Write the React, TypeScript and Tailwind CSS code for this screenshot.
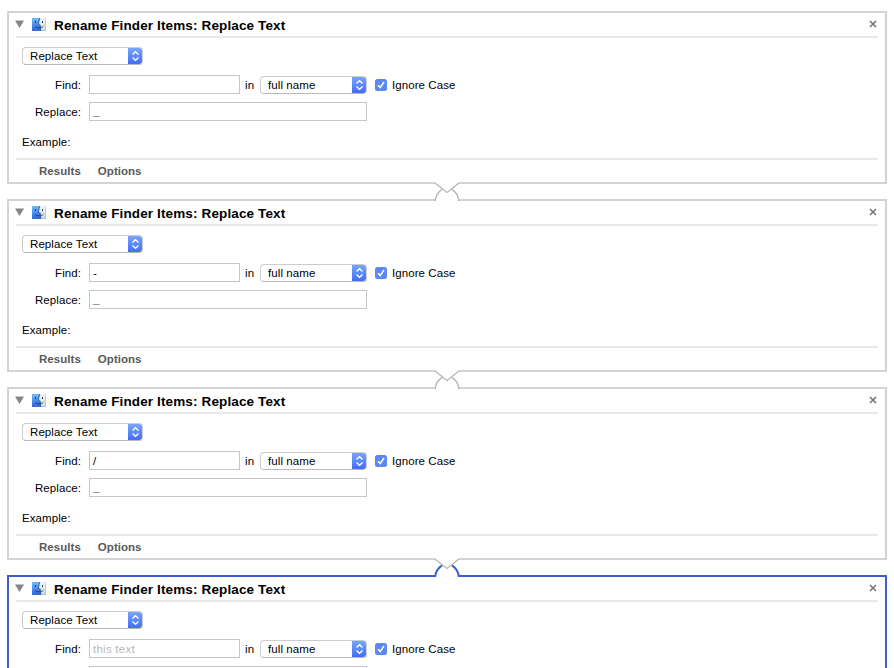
type Action = { find: string; replace?: string; placeholder?: string; selected?: boolean };

const actions: Action[] = [
  { find: "", replace: "_" },
  { find: "-", replace: "_" },
  { find: "/", replace: "_" },
  { find: "", placeholder: "this text", selected: true },
];

function FinderIcon() {
  return (
    <svg width="14" height="13" viewBox="0 0 14 13" className="ml-2 shrink-0">
      <defs>
        <linearGradient id="face" x1="0" y1="0" x2="0" y2="1">
          <stop offset="0" stopColor="#6ebcfb" />
          <stop offset="1" stopColor="#2f62e0" />
        </linearGradient>
        <linearGradient id="side" x1="0" y1="0" x2="0" y2="1">
          <stop offset="0" stopColor="#f3f6fa" />
          <stop offset="1" stopColor="#cddcf0" />
        </linearGradient>
      </defs>
      <rect width="14" height="13" fill="url(#side)" />
      <path d="M0 0H7.8C6.9 2.6 6.5 4.8 6.5 7H8.2C8.2 9.2 8.4 11 8.9 13H0Z" fill="url(#face)" />
      <path d="M7.8 0C6.9 2.6 6.5 4.8 6.5 7H8.2C8.2 9.2 8.4 11 8.9 13" fill="none" stroke="#27476f" strokeWidth=".8" />
      <path d="M3.5 3V5M10.5 3V5" stroke="#1c3557" strokeWidth="1" />
      <path d="M2.8 8.3C5 10.3 9.2 10.3 11.4 8.3" fill="none" stroke="#1c3557" strokeWidth=".9" />
      <path d="M13.5 0V12.5H0" fill="none" stroke="#6d8199" strokeOpacity=".3" />
    </svg>
  );
}

function Popup({ label, width }: { label: string; width: string }) {
  return (
    <div className={`${width} flex h-[18px] shrink-0 overflow-hidden rounded-[4px] border border-[#cdcdcd] border-b-[#b8b8b8] bg-white`}>
      <span className="flex-1 whitespace-pre pl-[7px] leading-[17px]">{label}</span>
      <span className="-my-px -mr-px flex h-[18px] w-[15px] items-center justify-center bg-linear-to-b from-[#7ca8fa] to-[#3f68f6]">
        <svg width="9" height="12" viewBox="0 0 9 12" fill="none" stroke="white" strokeWidth="1.3">
          <path d="M1.5 4.5 4.5 1.7 7.5 4.5M1.5 7.5 4.5 10.3 7.5 7.5" />
        </svg>
      </span>
    </div>
  );
}

function Connector({ selected }: { selected?: boolean }) {
  return (
    <svg width="26" height="21" viewBox="0 0 26 21" fill="none" className="absolute -top-[20px] left-[425px]">
      <path d="M1.5 0H24.5V4H1.5ZM2 16H24V21H2Z" fill="white" />
      <path
        d="M1.2 20C1.4 14.5 4 11 8 8.3M24.8 20C24.6 14.5 22 11 18 8.3"
        stroke={selected ? "#3f5cd0" : "#b5b5b5"}
        strokeWidth={selected ? 2 : 1.4}
      />
      <path d="M1 2 13 11.5 25 2" fill="white" stroke="#b5b5b5" strokeWidth="1.2" />
    </svg>
  );
}

function Card({ action, first }: { action: Action; first: boolean }) {
  const { find, replace, placeholder, selected } = action;
  const hasReplace = replace !== undefined;
  return (
    <section className={`relative h-[173px] w-[880px] shrink-0 border-2 px-[7px] ${selected ? "border-[#3f5cd0]" : "border-[#d3d3d3]"}`}>
      {!first && <Connector selected={selected} />}
      <header className="flex h-[25px] items-center border-b-2 border-[#e8e8e8]">
        <svg width="9" height="8" viewBox="0 0 9 8" className="-ml-px mb-px shrink-0">
          <path d="M0 .5H9L4.5 8Z" fill="#858585" />
        </svg>
        <FinderIcon />
        <h2 className="ml-2 flex-1 whitespace-pre pt-[3px] text-[13.5px] font-bold leading-[18px] tracking-[0.13px]">
          Rename Finder Items: Replace Text
        </h2>
        <svg width="8" height="8" viewBox="0 0 8 8" className="mb-0.5 mr-px">
          <path d="M1 1 7 7M7 1 1 7" stroke="#737373" strokeWidth="1.5" />
        </svg>
      </header>
      <div className="pl-[6px] pt-[9px]">
        <Popup label="Replace Text" width="w-[121px]" />
        <div className="mt-[10px] flex h-[19px] items-center">
          <span className="w-[59px] pt-px text-right leading-4">Find:</span>
          <span className="ml-2 h-[19px] w-[151px] border border-[#c6c6c6] pl-[3px] leading-[18px]">
            {find || <span className="tracking-[0.25px] text-[#b8b8b8]">{placeholder}</span>}
          </span>
          <span className="ml-[5px] w-[15px] pt-px leading-4">in</span>
          <Popup label="full name" width="w-[107px]" />
          <span className="ml-2 flex size-3 items-center justify-center rounded-[2.5px] bg-[#5c88f7]">
            <svg width="10" height="10" viewBox="0 0 10 10" fill="none" stroke="white" strokeWidth="1.5">
              <path d="M2 5.2 4.2 7.6 8 2" />
            </svg>
          </span>
          <span className="ml-[5px] whitespace-pre pt-px leading-4">Ignore Case</span>
        </div>
        <div className="mt-2 flex h-[19px] items-center">
          <span className="w-[59px] pt-px text-right leading-4">{hasReplace && "Replace:"}</span>
          <span className="ml-2 h-[19px] w-[278px] border border-[#c6c6c6] pl-[3px] leading-[17px] text-[#777]">{replace}</span>
        </div>
        {hasReplace && <p className="mt-[13px] h-[16px] leading-[16px]">Example:</p>}
      </div>
      {hasReplace && (
        <footer className="mt-2 flex gap-[17px] border-t-2 border-[#e8e8e8] pl-[23px] pt-[3px] font-bold leading-[16px] tracking-[0.04px] text-[#5a5a5a]">
          <span>Results</span>
          <span>Options</span>
        </footer>
      )}
    </section>
  );
}

export default function App() {
  return (
    <main className="flex h-[668px] w-[894px] flex-col gap-[15px] overflow-hidden bg-white pl-[7px] pt-[11px] font-['Liberation_Sans',Arial,sans-serif] text-[11.5px] tracking-[0.08px] text-black">
      {actions.map((action, i) => (
        <Card key={i} action={action} first={i === 0} />
      ))}
    </main>
  );
}
